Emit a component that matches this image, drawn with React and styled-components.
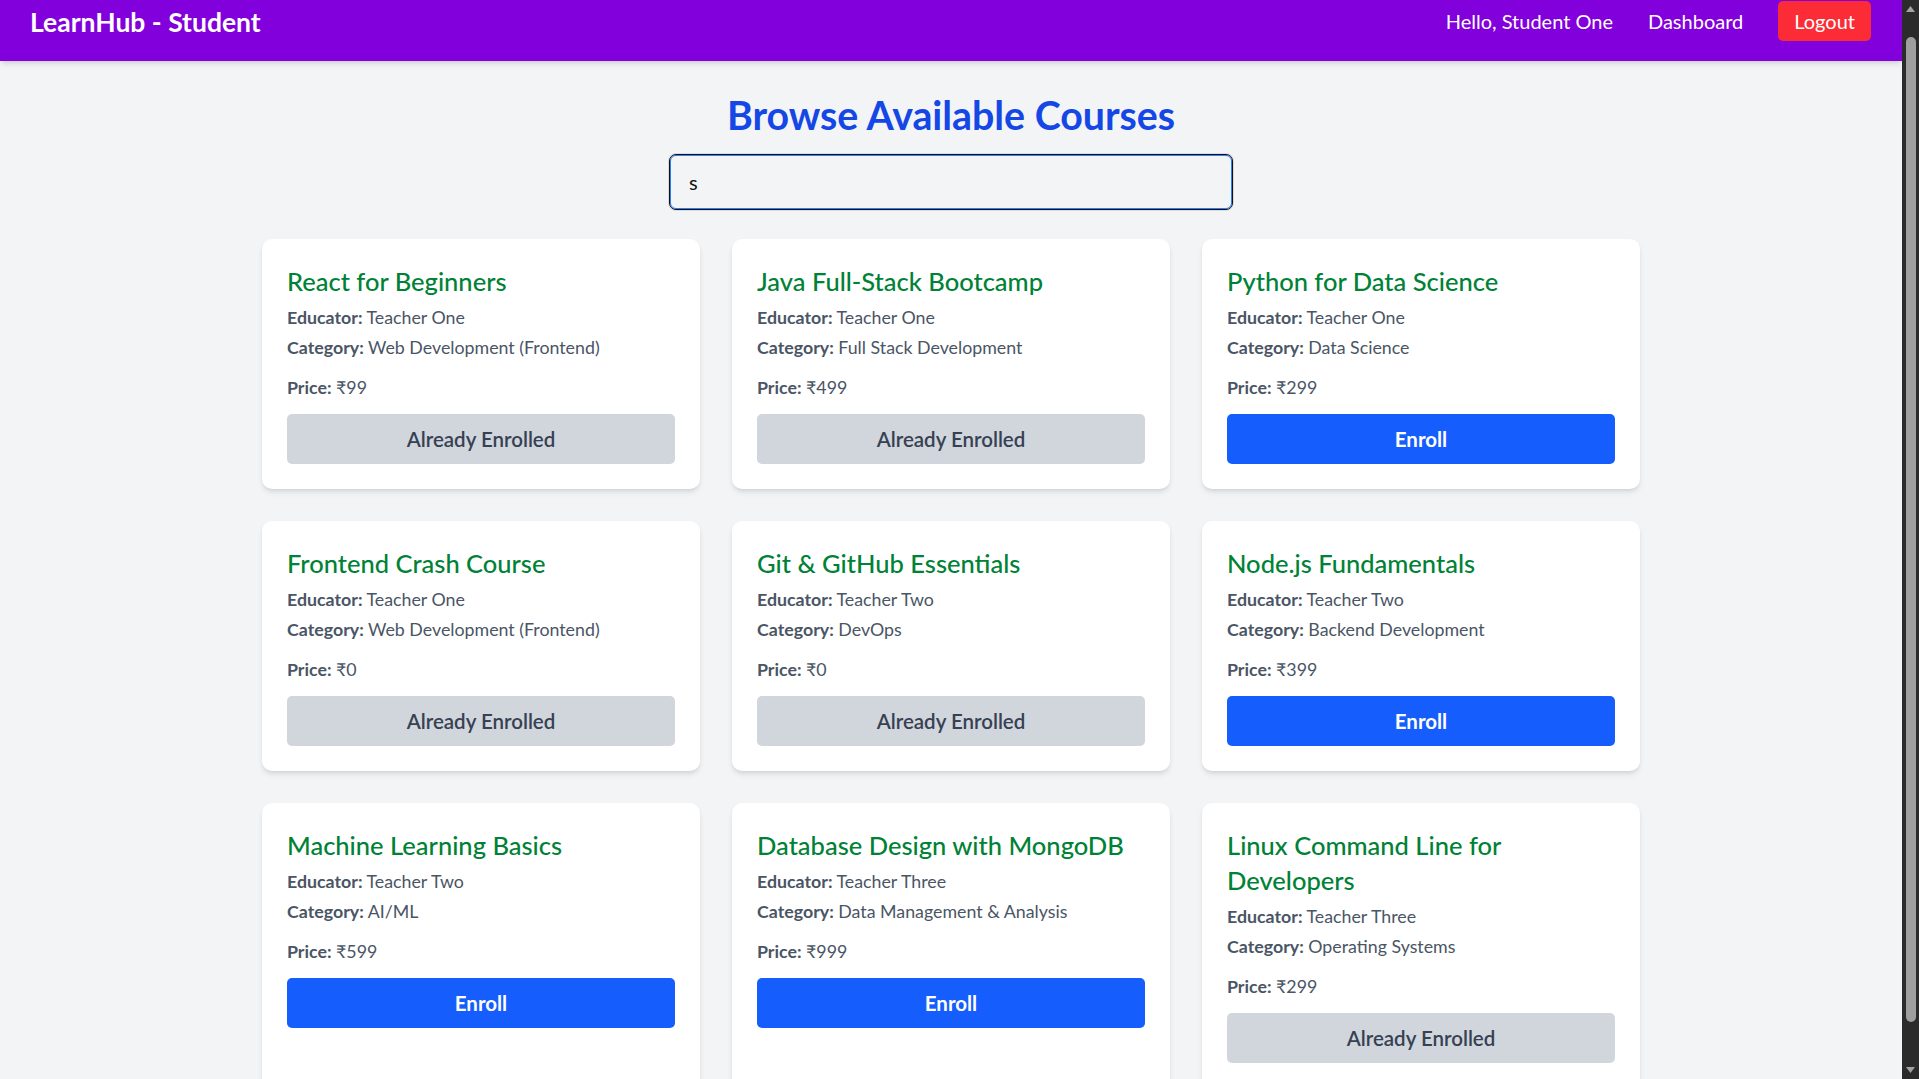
import React from 'react';
import styled, { createGlobalStyle } from 'styled-components';

const GlobalStyle = createGlobalStyle`
  html, body {
    margin: 0;
    height: 100%;
    overflow: hidden;
  }
  body {
    font-family: Lato, "Noto Sans", "DejaVu Sans", sans-serif;
    background: #f3f4f6;
  }
  #root {
    height: 100%;
  }
`;

const Frame = styled.div`
  display: flex;
  height: 100vh;
`;

const Page = styled.div`
  flex: 1;
  min-width: 0;
  overflow: hidden;
  background: #f3f4f6;
`;

const Navbar = styled.nav`
  position: relative;
  z-index: 1;
  height: 61px;
  box-sizing: border-box;
  padding: 0 31px 19px 30px;
  display: flex;
  align-items: center;
  justify-content: space-between;
  background: #8200db;
  box-shadow: 0 4px 6px -1px rgba(0, 0, 0, 0.1), 0 2px 4px -2px rgba(0, 0, 0, 0.1);
`;

const Brand = styled.div`
  margin-top: 3px;
  color: #ffffff;
  font-size: 26.5px;
  font-weight: 700;
  line-height: 1.2;
`;

const NavLinks = styled.div`
  display: flex;
  align-items: center;
  gap: 35px;
`;

const NavText = styled.span`
  color: #ffffff;
  font-size: 20px;
  line-height: 1.2;
`;

const LogoutButton = styled.button`
  height: 40px;
  padding: 0 16px;
  border: none;
  border-radius: 5px;
  background: #fb2c36;
  color: #ffffff;
  font-family: inherit;
  font-size: 20px;
  cursor: pointer;
`;

const Main = styled.main`
  padding-top: 32px;
`;

const Heading = styled.h1`
  margin: 0;
  text-align: center;
  color: #1447e6;
  font-size: 39.3px;
  line-height: 44px;
  font-weight: 700;
`;

const SearchInput = styled.input`
  display: block;
  box-sizing: border-box;
  width: 562px;
  height: 54px;
  margin: 18px auto 0;
  padding: 0 18px;
  border: 1px solid #2b7fff;
  border-radius: 6px;
  outline: 1px solid #111111;
  box-shadow: 0 0 0 2px rgba(0, 0, 0, 0.1);
  background: transparent;
  color: #111111;
  font-family: inherit;
  font-size: 20px;
`;

const Grid = styled.div`
  display: grid;
  grid-template-columns: repeat(3, 438px);
  gap: 32px;
  justify-content: center;
  margin-top: 30px;
`;

const Card = styled.div`
  display: flex;
  flex-direction: column;
  padding: 25px;
  background: #ffffff;
  border-radius: 10px;
  box-shadow: 0 4px 6px -1px rgba(0, 0, 0, 0.1), 0 2px 4px -2px rgba(0, 0, 0, 0.1);
`;

const CourseTitle = styled.h3`
  margin: 0;
  color: #008236;
  font-size: 25.5px;
  line-height: 35px;
  font-weight: 500;
`;

const Meta = styled.p`
  margin: ${p => (p.$gap ? `${p.$gap}px` : 0)} 0 0;
  color: #4a5565;
  font-size: 17.8px;
  line-height: 30px;

  strong {
    font-weight: 700;
  }
`;

const ActionButton = styled.button`
  height: 50px;
  margin-top: 12px;
  border: none;
  border-radius: 5px;
  background: ${p => (p.$enrolled ? '#d1d5dc' : '#155dfc')};
  color: ${p => (p.$enrolled ? '#364153' : '#ffffff')};
  font-family: inherit;
  font-size: 20.5px;
  font-weight: ${p => (p.$enrolled ? 600 : 700)};
  cursor: ${p => (p.$enrolled ? 'default' : 'pointer')};
`;

const ScrollTrack = styled.div`
  width: 17px;
  flex-shrink: 0;
  box-sizing: border-box;
  padding: 6px 0 6px;
  display: flex;
  flex-direction: column;
  align-items: center;
  background: #2b2b2b;
`;

const ScrollThumb = styled.div`
  width: 10px;
  height: 985px;
  margin-top: 25px;
  border-radius: 5px;
  background: #9f9f9f;
`;

const Spacer = styled.div`
  flex: 1;
`;

const Arrow = ({ down }) => (
  <svg width="9" height="6" viewBox="0 0 9 6">
    <polygon points={down ? '0,0 9,0 4.5,6' : '0,6 9,6 4.5,0'} fill="#a3a3a3" />
  </svg>
);

const courses = [
  { title: 'React for Beginners', educator: 'Teacher One', category: 'Web Development (Frontend)', price: 99, enrolled: true },
  { title: 'Java Full-Stack Bootcamp', educator: 'Teacher One', category: 'Full Stack Development', price: 499, enrolled: true },
  { title: 'Python for Data Science', educator: 'Teacher One', category: 'Data Science', price: 299, enrolled: false },
  { title: 'Frontend Crash Course', educator: 'Teacher One', category: 'Web Development (Frontend)', price: 0, enrolled: true },
  { title: 'Git & GitHub Essentials', educator: 'Teacher Two', category: 'DevOps', price: 0, enrolled: true },
  { title: 'Node.js Fundamentals', educator: 'Teacher Two', category: 'Backend Development', price: 399, enrolled: false },
  { title: 'Machine Learning Basics', educator: 'Teacher Two', category: 'AI/ML', price: 599, enrolled: false },
  { title: 'Database Design with MongoDB', educator: 'Teacher Three', category: 'Data Management & Analysis', price: 999, enrolled: false },
  { title: 'Linux Command Line for Developers', educator: 'Teacher Three', category: 'Operating Systems', price: 299, enrolled: true }
];

export default function App() {
  return (
    <Frame>
      <GlobalStyle />
      <Page>
        <Navbar>
          <Brand>LearnHub - Student</Brand>
          <NavLinks>
            <NavText>Hello, Student One</NavText>
            <NavText>Dashboard</NavText>
            <LogoutButton>Logout</LogoutButton>
          </NavLinks>
        </Navbar>

        <Main>
          <Heading>Browse Available Courses</Heading>
          <SearchInput type="text" defaultValue="s" />

          <Grid>
            {courses.map(course => (
              <Card key={course.title}>
                <CourseTitle>{course.title}</CourseTitle>
                <Meta $gap={3}>
                  <strong>Educator:</strong> {course.educator}
                </Meta>
                <Meta>
                  <strong>Category:</strong> {course.category}
                </Meta>
                <Meta $gap={10}>
                  <strong>Price:</strong> ₹{course.price}
                </Meta>
                <ActionButton $enrolled={course.enrolled}>
                  {course.enrolled ? 'Already Enrolled' : 'Enroll'}
                </ActionButton>
              </Card>
            ))}
          </Grid>
        </Main>
      </Page>

      <ScrollTrack>
        <Arrow />
        <ScrollThumb />
        <Spacer />
        <Arrow down />
      </ScrollTrack>
    </Frame>
  );
}
